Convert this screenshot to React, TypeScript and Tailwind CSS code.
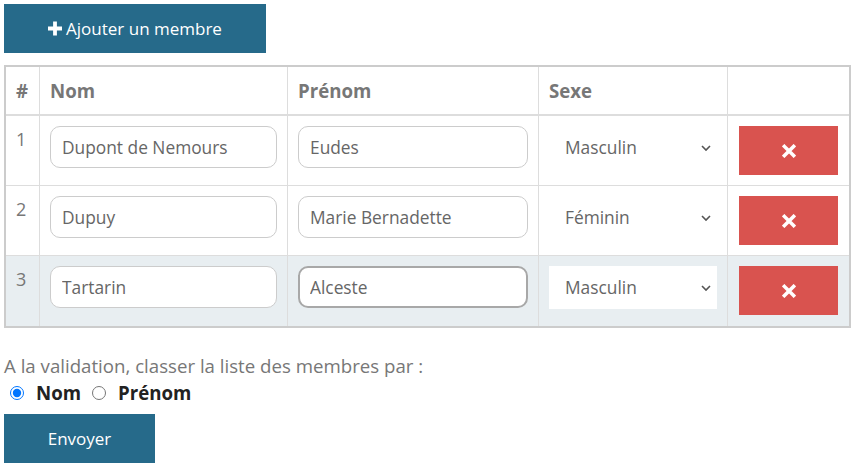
const rows = [
  { n: 1, nom: "Dupont de Nemours", prenom: "Eudes", sexe: "Masculin" },
  { n: 2, nom: "Dupuy", prenom: "Marie Bernadette", sexe: "Féminin" },
  { n: 3, nom: "Tartarin", prenom: "Alceste", sexe: "Masculin" },
];

function Chevron() {
  return (
    <svg
      className="pointer-events-none absolute right-[6px] top-1/2 -translate-y-1/2"
      width="10"
      height="7"
      viewBox="0 0 10 7"
    >
      <path d="M1 1.5 L5 5.5 L9 1.5" fill="none" stroke="#555" strokeWidth="1.6" />
    </svg>
  );
}

function PlusIcon() {
  return (
    <svg width="14" height="15" viewBox="0 0 14 15">
      <path d="M7 0.5 V14.5 M0 7.5 H14" fill="none" stroke="#fff" strokeWidth="3.8" />
    </svg>
  );
}

function CrossIcon() {
  return (
    <svg width="14" height="14" viewBox="0 0 14 14">
      <path d="M2.4 2.4 L11.6 11.6 M11.6 2.4 L2.4 11.6" fill="none" stroke="#fff" strokeWidth="3.5" strokeLinecap="square" />
    </svg>
  );
}

export default function App() {
  return (
    <div className="min-h-[465px] bg-white p-[4px] font-['Open_Sans',sans-serif] text-[18px] leading-[27px]">
      <button className="flex h-[49px] w-[262px] items-center justify-center gap-[4px] bg-[#266a8a] text-[17px] text-white">
        <PlusIcon />
        <span>Ajouter un membre</span>
      </button>

      <div className="mt-[12px] w-[847px] border-2 border-[#ccc]">
        <div className="grid h-[49px] grid-cols-[33px_248px_251px_189px_122px] border-b-2 border-[#ddd] text-[18.67px] font-bold text-[#777]">
          <div className="flex items-center px-[10px]">#</div>
          <div className="flex items-center border-l border-[#ddd] px-[10px]">Nom</div>
          <div className="flex items-center border-l border-[#ddd] px-[10px]">Prénom</div>
          <div className="flex items-center border-l border-[#ddd] px-[10px]">Sexe</div>
          <div className="border-l border-[#ddd]"></div>
        </div>
        {rows.map((r, i) => {
          const last = i === rows.length - 1;
          return (
            <div
              key={r.n}
              className={
                "grid h-[70px] grid-cols-[33px_248px_251px_189px_122px] " +
                (last ? "bg-[#e8eef1]" : "border-b border-[#ddd] bg-white")
              }
            >
              <div className="px-[10px] pt-[10px] text-[#777]">{r.n}</div>
              <div className="border-l border-[#ddd] px-[10px] pt-[10px]">
                <input
                  defaultValue={r.nom}
                  className="h-[42px] w-full rounded-[10px] border border-[#ccc] bg-white px-[11px] text-[17.33px] text-[#666] outline-none"
                />
              </div>
              <div className="border-l border-[#ddd] px-[10px] pt-[10px]">
                <input
                  defaultValue={r.prenom}
                  className={
                    "h-[42px] w-full rounded-[10px] bg-white text-[17.33px] text-[#666] outline-none " +
                    (last ? "border-2 border-[#a8a8a8] px-[10px]" : "border border-[#ccc] px-[11px]")
                  }
                />
              </div>
              <div className="border-l border-[#ddd] px-[10px] pt-[10px]">
                <div className="relative h-[43px] w-full">
                  <select
                    defaultValue={r.sexe}
                    className="h-[43px] w-full appearance-none bg-white pl-[16px] text-[17.33px] text-[#666] outline-none"
                  >
                    <option>Masculin</option>
                    <option>Féminin</option>
                  </select>
                  <Chevron />
                </div>
              </div>
              <div className="border-l border-[#ddd] pl-[11px] pt-[10px]">
                <button className="flex h-[49px] w-[99px] items-center justify-center bg-[#d9534f] text-white">
                  <CrossIcon />
                </button>
              </div>
            </div>
          );
        })}
      </div>

      <p className="mt-[24px] text-[18.67px] text-[#777]">A la validation, classer la liste des membres par :</p>
      <div className="flex h-[27px] items-center text-[18.67px] font-bold text-[#222]">
        <input type="radio" name="tri" defaultChecked className="m-0 ml-[6px] h-[14px] w-[14px]" />
        <span className="ml-[12px]">Nom</span>
        <input type="radio" name="tri" className="m-0 ml-[11px] h-[14px] w-[14px]" />
        <span className="ml-[12px]">Prénom</span>
      </div>
      <button className="mt-[8px] h-[49px] w-[151px] bg-[#266a8a] text-[17px] text-white">Envoyer</button>
    </div>
  );
}
